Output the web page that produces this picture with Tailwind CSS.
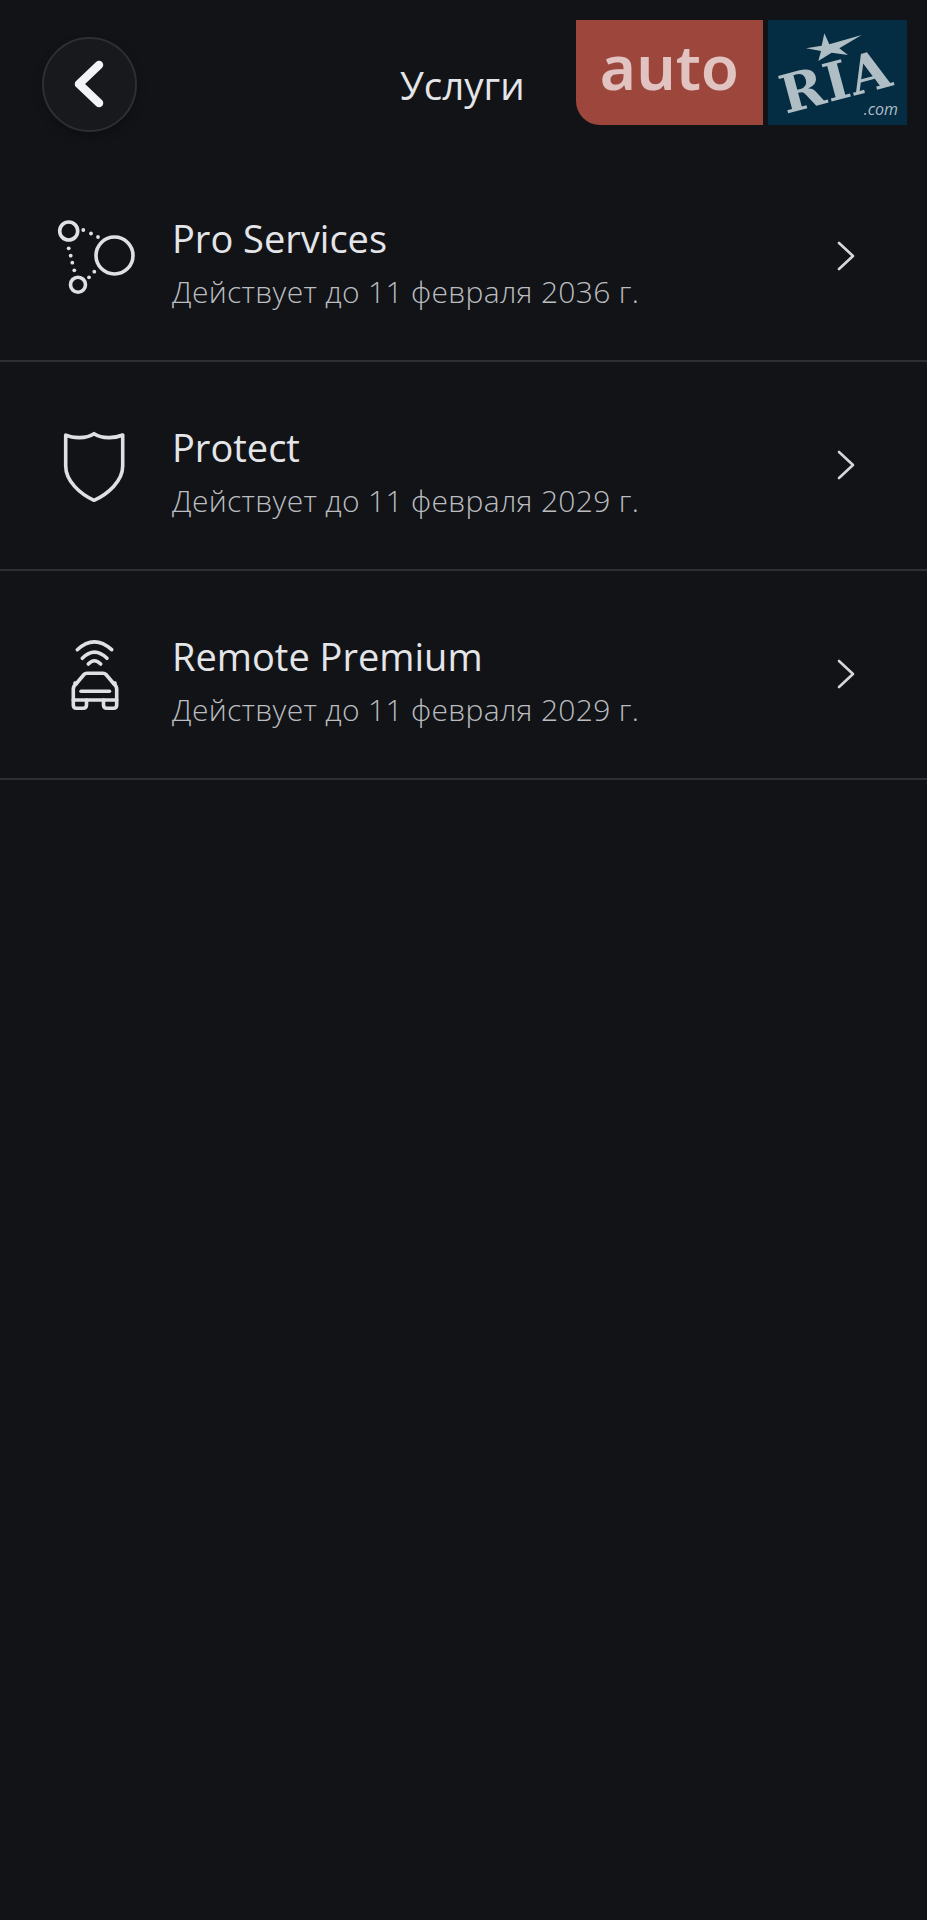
<!DOCTYPE html>
<html lang="ru">
<head>
<meta charset="utf-8">
<script src="https://cdn.jsdelivr.net/npm/@tailwindcss/browser@4"></script>
<title>Услуги</title>
</head>
<body class="bg-[#111317] font-['Open_Sans','Noto_Sans',sans-serif]">
<div class="relative w-[927px] h-[1920px] bg-[#111317] overflow-hidden">
  <!-- Watermark -->
  <div class="absolute left-[576px] top-[20px] flex h-[105px] gap-[5px]">
    <div class="w-[187px] h-full bg-[#9c463c] rounded-bl-[24px] flex items-center justify-center text-[#e1c4c1] text-[62px] font-semibold leading-none pb-[14px] font-['Noto_Sans',sans-serif]">auto</div>
    <div class="relative w-[139px] h-full bg-[#042c42] overflow-hidden">
      <svg class="absolute left-0 top-0" width="139" height="105" viewBox="624 60 417 315">
        <polygon fill="#afbdc5" points="793,100 808,133 905,105 838,145 864,165 815,158 775,183 783,153 738,145 785,137"/>
      </svg>
      <div class="absolute left-[11px] top-[35px] -rotate-[15deg] text-[#afbdc5] text-[53px] leading-none font-bold tracking-[1px] font-['DejaVu_Serif',serif]">RIA</div>
      <div class="absolute right-[9px] bottom-[8px] text-[#afbdc5] text-[16px] leading-none italic font-['Open_Sans',sans-serif]">.com</div>
    </div>
  </div>

  <!-- Header -->
  <header class="flex items-center h-[153px] pt-[15px] pl-[42px]">
    <button class="w-[95px] h-[95px] rounded-full bg-[#18191c] border-2 border-[#2e2f32] shadow-[0_4px_10px_rgba(0,0,0,0.25)] flex items-center justify-center">
      <svg width="40" height="56" viewBox="0 0 40 56" fill="none" stroke="#f2f3f6" stroke-width="8.5" stroke-linecap="round" stroke-linejoin="round"><path d="M29 9 L9 28 L29 47"/></svg>
    </button>
    <h1 class="ml-[263px] mt-[3px] text-[#e4e5e8] text-[38.5px] leading-none font-normal">Услуги</h1>
  </header>

  <!-- Rows -->
  <main>
    <div class="flex items-center h-[209px] border-b-2 border-[#2d2f32]">
      <div class="w-[172px] pl-[50px] shrink-0">
        <svg width="90" height="90" viewBox="50 211 90 90" fill="none" stroke="#dfe0e3" stroke-width="3.6" stroke-linecap="round">
          <circle cx="114.5" cy="254.5" r="18.5"/>
          <circle cx="68.7" cy="230" r="9"/>
          <circle cx="78" cy="283.7" r="7.5"/>
          <g fill="#dfe0e3" stroke="none">
            <circle cx="83.3" cy="229" r="1.9"/><circle cx="91" cy="232.5" r="1.9"/><circle cx="98" cy="236" r="1.9"/>
            <circle cx="68.7" cy="247.3" r="1.9"/><circle cx="70.7" cy="254.7" r="1.9"/><circle cx="72.3" cy="261.7" r="1.9"/><circle cx="74.3" cy="269.3" r="1.9"/>
            <circle cx="89" cy="276.3" r="1.9"/><circle cx="94.3" cy="270.7" r="1.9"/>
          </g>
        </svg>
      </div>
      <div class="flex-1 mt-[13px]">
        <div class="text-[#e4e5e8] text-[38px] leading-[48px]">Pro Services</div>
        <div class="text-[#bbbdc0] text-[30px] leading-[40px] mt-[10px] font-light tracking-[0.32px]">Действует до 11 февраля 2036 г.</div>
      </div>
      <svg class="mr-[70px] -mt-[2px]" width="20" height="32" viewBox="0 0 20 32" fill="none" stroke="#d5d6d8" stroke-width="2.6" stroke-linecap="round" stroke-linejoin="round"><path d="M2 3 L16 16 L2 29"/></svg>
    </div>

    <div class="flex items-center h-[209px] border-b-2 border-[#2d2f32]">
      <div class="w-[172px] pl-[50px] shrink-0">
        <svg width="90" height="90" viewBox="50 420 90 90" fill="none" stroke="#dfe0e3" stroke-width="3.6" stroke-linecap="round" stroke-linejoin="round">
          <path d="M65.7 434 C73 437.5 86 438 94 432.7 C102 438 115 437.5 122.7 434 L122.7 465 C122.7 480 108 493 94 499.3 C80 493 65.7 480 65.7 465 Z"/>
        </svg>
      </div>
      <div class="flex-1 mt-[13px]">
        <div class="text-[#e4e5e8] text-[38px] leading-[48px]">Protect</div>
        <div class="text-[#bbbdc0] text-[30px] leading-[40px] mt-[10px] font-light tracking-[0.32px]">Действует до 11 февраля 2029 г.</div>
      </div>
      <svg class="mr-[70px] -mt-[2px]" width="20" height="32" viewBox="0 0 20 32" fill="none" stroke="#d5d6d8" stroke-width="2.6" stroke-linecap="round" stroke-linejoin="round"><path d="M2 3 L16 16 L2 29"/></svg>
    </div>

    <div class="flex items-center h-[209px] border-b-2 border-[#2d2f32]">
      <div class="w-[172px] pl-[50px] shrink-0">
        <svg width="90" height="90" viewBox="50 629 90 90" fill="none" stroke="#dfe0e3" stroke-width="3.6" stroke-linecap="round" stroke-linejoin="round">
          <path d="M77.3 648.7 Q94.3 633 111.7 648.7"/>
          <path d="M82.3 657.3 Q94.3 645 107 657.3"/>
          <path d="M88.3 663 Q94.3 656.5 100.7 663"/>
          <path d="M73.3 688.3 Q73.3 685 76 683 L84 673.5 Q85 672.3 87 672.3 L103 672.3 Q105 672.3 106 673.5 L114 683 Q116.7 685 116.7 688.3 L116.7 704 Q116.7 707.3 113.5 707.3 L107 707.3 Q103.5 707.3 103.5 704 L103.5 699 L86.5 699 L86.5 704 Q86.5 707.3 83 707.3 L76.5 707.3 Q73.3 707.3 73.3 704 Z"/>
          <path d="M81 690.3 L109.5 690.3"/>
          <path d="M86.5 699 L73.3 699 M103.5 699 L116.7 699"/>
          <path d="M75 682 L76.5 682.5 M115 682 L113.5 682.5"/>
        </svg>
      </div>
      <div class="flex-1 mt-[13px]">
        <div class="text-[#e4e5e8] text-[38px] leading-[48px]">Remote Premium</div>
        <div class="text-[#bbbdc0] text-[30px] leading-[40px] mt-[10px] font-light tracking-[0.32px]">Действует до 11 февраля 2029 г.</div>
      </div>
      <svg class="mr-[70px] -mt-[2px]" width="20" height="32" viewBox="0 0 20 32" fill="none" stroke="#d5d6d8" stroke-width="2.6" stroke-linecap="round" stroke-linejoin="round"><path d="M2 3 L16 16 L2 29"/></svg>
    </div>
  </main>
</div>
</body>
</html>
